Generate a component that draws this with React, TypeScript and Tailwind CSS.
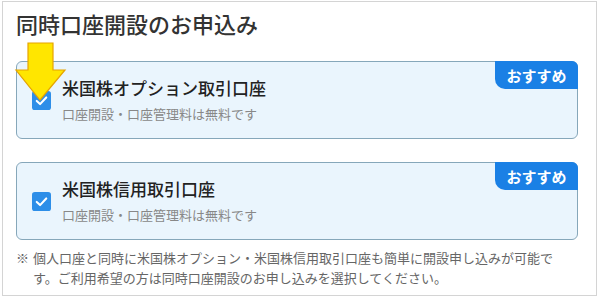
import React from "react";

const font = { fontFamily: '"Noto Sans CJK JP", "Noto Sans", sans-serif' };

const CheckIcon = () => (
  <svg viewBox="0 0 20 20" className="w-[19px] h-[19px] shrink-0">
    <rect x="0" y="0" width="20" height="20" rx="3" fill="#2d8ee8" />
    <path
      d="M5 10.5 L8.5 13.8 L15 6.8"
      fill="none"
      stroke="#ffffff"
      strokeWidth="2.2"
      strokeLinecap="round"
      strokeLinejoin="round"
    />
  </svg>
);

const OptionCard = ({ title }: { title: string }) => (
  <div className="relative w-[562px] h-[78px] rounded-[6px] border border-[#86a7ba] bg-[#eaf5fd] flex items-center pl-[15px]">
    <CheckIcon />
    <div className="flex flex-col ml-[11px]">
      <span className="text-[17px] leading-[24px] text-[#222] font-medium">{title}</span>
      <span className="text-[13px] leading-[20px] text-[#888] mt-[4px]">
        口座開設・口座管理料は無料です
      </span>
    </div>
    <div className="absolute top-[-1px] right-[-1px] w-[83px] h-[28px] bg-[#1a80e5] rounded-tr-[6px] rounded-bl-[10px] flex items-center justify-center">
      <span className="text-[15px] font-bold text-white leading-none">おすすめ</span>
    </div>
  </div>
);

export default function App() {
  return (
    <div style={font} className="relative w-[600px] h-[298px] bg-white">
      <div className="ml-[2px] mt-[1px] w-[595px] h-[295px] border border-[#d4d4d4] pl-[13px] pt-[6px]">
        <h2 className="text-[22px] leading-[30px] font-medium text-[#333]">同時口座開設のお申込み</h2>
        <div className="mt-[23px] flex flex-col gap-[23px]">
          <OptionCard title="米国株オプション取引口座" />
          <OptionCard title="米国株信用取引口座" />
        </div>
        <div className="mt-[8px] w-[545px] flex text-[13px] leading-[20px] text-[#666]">
          <span className="w-[17px] shrink-0">※</span>
          <p>
            個人口座と同時に米国株オプション・米国株信用取引口座も簡単に開設申し込みが可能です。ご利用希望の方は同時口座開設のお申し込みを選択してください。
          </p>
        </div>
      </div>
      <svg className="absolute left-0 top-0 w-[80px] h-[110px]" viewBox="0 0 80 110">
        <polygon
          points="28,42 53,42 53,69 65,69 40,99 16,69 28,69"
          fill="#ffe600"
          stroke="#e6a400"
          strokeWidth="1.2"
          strokeLinejoin="miter"
        />
      </svg>
    </div>
  );
}
